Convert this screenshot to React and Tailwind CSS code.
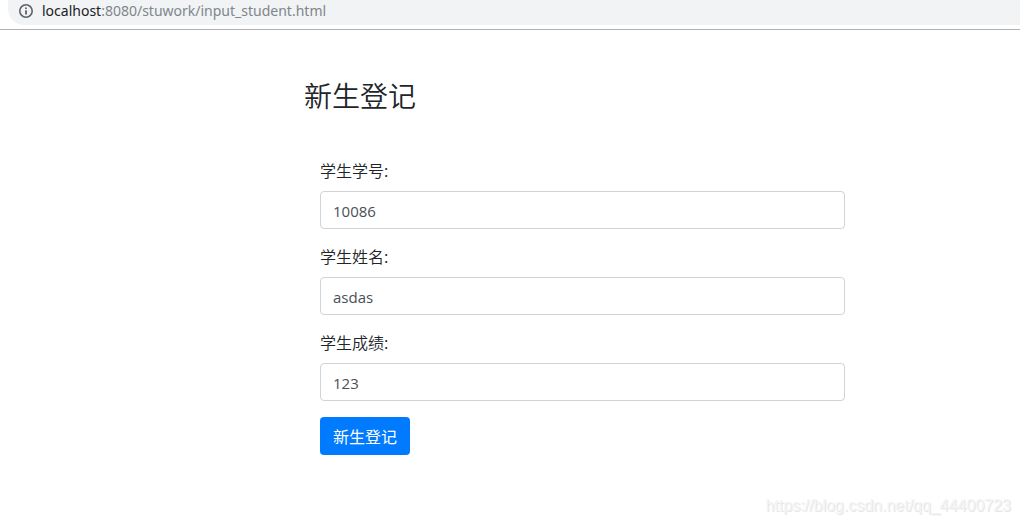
import { useState } from "react";

const FIELDS = [
  { id: "stuNo", label: "学生学号:" },
  { id: "stuName", label: "学生姓名:" },
  { id: "stuScore", label: "学生成绩:" },
];

/* ── 地址栏 ─────────────────────────────────────── */
function AddressBar() {
  return (
    <header className="h-[30px] border-b border-[#b0b0b0] bg-white">
      <div className="ml-2 flex h-[25px] items-start rounded-bl-[16px] bg-[#f1f3f4] pl-[11px]">
        <svg className="mt-1 h-[14px] w-[14px] shrink-0" viewBox="0 0 14 14" fill="none" aria-hidden="true">
          <circle cx="7" cy="7" r="6.2" stroke="#5f6368" strokeWidth="1.6" />
          <path d="M6.1 6.2h1.8v4.4H6.1zM6.1 3.4h1.8v1.7H6.1z" fill="#5f6368" />
        </svg>
        <p className="ml-[9px] font-['Noto_Sans','Open_Sans',sans-serif] text-[14px] leading-[22px] text-[#80868b]">
          <span className="text-[#202124]">localhost</span>:8080/stuwork/input_student.html
        </p>
      </div>
    </header>
  );
}

/* ── 登记表单 ───────────────────────────────────── */
export default function App() {
  const [values, setValues] = useState({ stuNo: "10086", stuName: "asdas", stuScore: "123" });

  function handleChange(e) {
    setValues({ ...values, [e.target.name]: e.target.value });
  }

  return (
    <div className="flex min-h-screen flex-col bg-white font-['Open_Sans','Noto_Sans_CJK_SC',sans-serif] text-[#212529]">
      <AddressBar />

      <main className="ml-[304px] mr-40 flex-1 pt-12">
        <h2 className="font-['Noto_Sans_CJK_SC',sans-serif] text-[28px] font-[350] leading-[34px]">新生登记</h2>

        <form className="mt-[46px] flex flex-col items-start gap-[15px] pl-4 pr-[15px]" onSubmit={(e) => e.preventDefault()}>
          {FIELDS.map((field) => (
            <div key={field.id} className="w-full">
              <label htmlFor={field.id} className="mb-[9px] block font-['Noto_Sans_CJK_SC',sans-serif] text-[16px] font-[350] leading-6">
                {field.label}
              </label>
              <input
                id={field.id}
                name={field.id}
                type="text"
                value={values[field.id]}
                onChange={handleChange}
                className="block h-[38px] w-full rounded border border-[#ced4da] bg-white px-3 pt-[2px] text-[15px] text-[#495057] outline-none focus:border-[#80bdff]"
              />
            </div>
          ))}
          <button type="submit" className="mt-px h-[38px] rounded bg-[#007bff] px-[13px] font-['Noto_Sans_CJK_SC',sans-serif] text-[16px] leading-6 text-white hover:bg-[#0069d9]">
            新生登记
          </button>
        </form>
      </main>

      <footer className="flex justify-end pb-[6px] pr-[9px]">
        <span className="font-['Liberation_Sans',sans-serif] text-[16px] leading-6 text-[#f4f4f4] [text-shadow:1px_1px_0_#e6e6e6]">
          https://blog.csdn.net/qq_44400723
        </span>
      </footer>
    </div>
  );
}
